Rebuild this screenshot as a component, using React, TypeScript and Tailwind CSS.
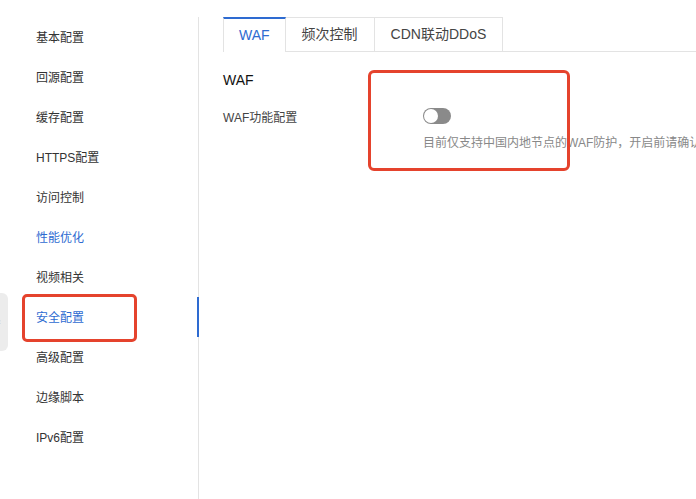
const navItems = [
  "基本配置",
  "回源配置",
  "缓存配置",
  "HTTPS配置",
  "访问控制",
  "性能优化",
  "视频相关",
  "安全配置",
  "高级配置",
  "边缘脚本",
  "IPv6配置",
];

const tabs = ["WAF", "频次控制", "CDN联动DDoS"];

const font = {
  fontFamily: '"Liberation Sans", "Noto Sans CJK SC", sans-serif',
};

export default function App() {
  const activeNav = "安全配置";
  const hoverNav = "性能优化";

  return (
    <div className="relative flex h-[499px] w-[696px] overflow-hidden bg-white" style={font}>
      {/* collapse handle at the left edge */}
      <div className="absolute left-0 top-[293px] flex h-[58px] w-[8px] items-center justify-start rounded-r-md bg-[#ececec]">
        <span className="-ml-[2px] text-[9px] leading-none text-[#c4c4c4]">‹</span>
      </div>

      <aside className="mt-[17px] w-[199px] shrink-0 border-r border-[#e3e3e3]">
        <ul className="flex flex-col">
          {navItems.map((n) => {
            const active = n === activeNav;
            const blue = active || n === hoverNav;
            return (
              <li
                key={n}
                className={`relative flex h-10 items-center pl-9 pt-[2px] text-[12px] ${
                  blue ? "text-[#2e6bd1]" : "text-[#333]"
                }`}
              >
                {n}
                {active && (
                  <span className="absolute right-[-1px] top-0 h-full w-[2px] bg-[#2e6bd1]" />
                )}
              </li>
            );
          })}
        </ul>
      </aside>

      <main className="flex flex-1 flex-col pl-6 pt-[17px]">
        <div className="flex h-[35px]">
          {tabs.map((t, i) =>
            i === 0 ? (
              <div
                key={t}
                className="flex items-center border-l border-r border-t-2 border-[#e3e3e3] border-t-[#2e6bd1] px-[15px] text-[14px] text-[#2e6bd1]"
              >
                {t}
              </div>
            ) : (
              <div
                key={t}
                className="flex items-center border-b border-r border-t border-[#e3e3e3] px-4 text-[14px] text-[#444]"
              >
                {t}
              </div>
            ),
          )}
          <div className="flex-1 border-b border-[#e3e3e3]" />
        </div>

        <h2 className="mt-[18px] text-[14px] font-medium leading-[20px] text-[#111]">WAF</h2>

        <div className="mt-[18px] flex">
          <div className="w-[200px] shrink-0 pt-[2px] text-[12px] leading-[16px] text-[#444]">
            WAF功能配置
          </div>
          <div className="flex flex-col">
            <button className="flex h-[16px] w-[28px] items-center rounded-full bg-[#8a8a8a] p-[1px]">
              <span className="h-[14px] w-[14px] rounded-full bg-white" />
            </button>
            <p className="mt-[11px] whitespace-nowrap text-[12px] leading-[16px] text-[#888]">
              目前仅支持中国内地节点的WAF防护，开启前请确认域名加速区域
            </p>
          </div>
        </div>
      </main>

      {/* annotation boxes */}
      <div className="pointer-events-none absolute left-[22px] top-[294px] h-[48px] w-[115px] rounded-[5px] border-[3px] border-[#e5432d]" />
      <div className="pointer-events-none absolute left-[368px] top-[70px] h-[101px] w-[202px] rounded-[6px] border-[3px] border-[#e5432d]" />
    </div>
  );
}
